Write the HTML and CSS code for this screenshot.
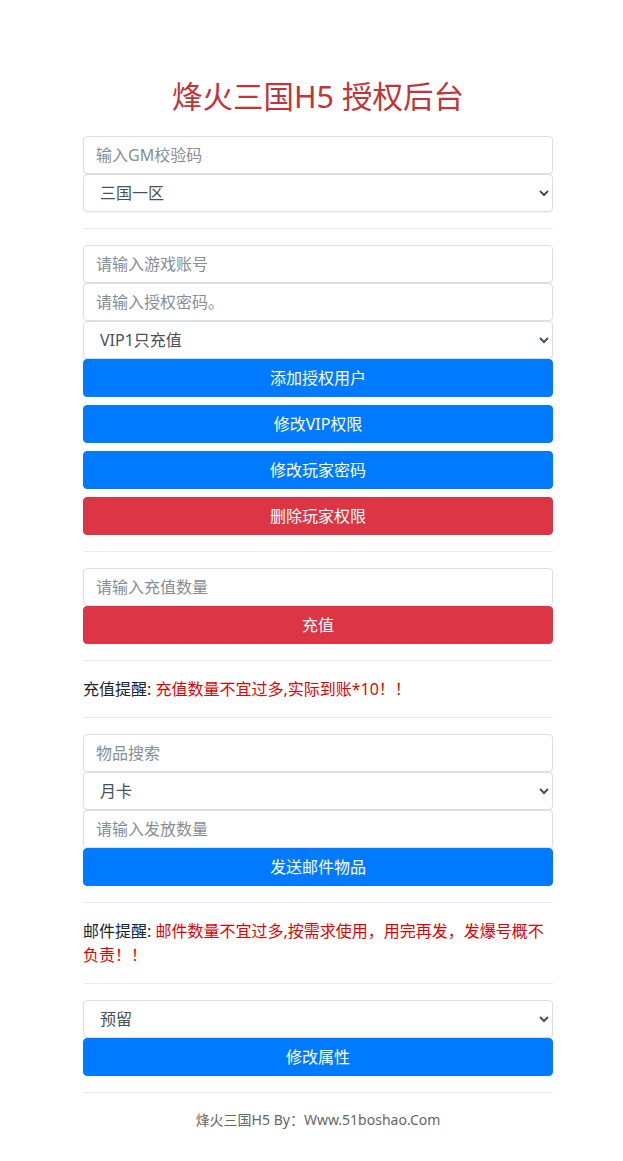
FILE: index.html
```html
<!DOCTYPE html>
<html lang="zh-CN">
<head>
  <meta charset="UTF-8">
  <title>烽火三国H5 授权后台</title>
  <link rel="stylesheet" href="styles.css">
</head>
<body>
  <div class="container">
    <h2 class="title">烽火三国H5 授权后台</h2>

    <div class="group">
      <input class="form-control" type="text" placeholder="输入GM校验码">
      <select class="form-control">
        <option>三国一区</option>
      </select>
    </div>

    <hr>

    <div class="group">
      <input class="form-control" type="text" placeholder="请输入游戏账号">
      <input class="form-control" type="password" placeholder="请输入授权密码。">
      <select class="form-control">
        <option>VIP1只充值</option>
      </select>
      <button class="btn btn-primary">添加授权用户</button>
      <button class="btn btn-primary">修改VIP权限</button>
      <button class="btn btn-primary">修改玩家密码</button>
      <button class="btn btn-danger">删除玩家权限</button>
    </div>

    <hr>

    <div class="group">
      <input class="form-control" type="text" placeholder="请输入充值数量">
      <button class="btn btn-danger">充值</button>
    </div>

    <hr>

    <p class="notice">充值提醒: <span class="warn">充值数量不宜过多,实际到账*10！！</span></p>

    <hr>

    <div class="group">
      <input class="form-control" type="text" placeholder="物品搜索">
      <select class="form-control">
        <option>月卡</option>
      </select>
      <input class="form-control" type="text" placeholder="请输入发放数量">
      <button class="btn btn-primary">发送邮件物品</button>
    </div>

    <hr>

    <p class="notice">邮件提醒: <span class="warn">邮件数量不宜过多,按需求使用，用完再发，发爆号概不负责！！</span></p>

    <hr>

    <div class="group">
      <select class="form-control">
        <option>预留</option>
      </select>
      <button class="btn btn-primary">修改属性</button>
    </div>

    <hr>

    <p class="footer">烽火三国H5 By：Www.51boshao.Com</p>
  </div>
</body>
</html>
```

FILE: styles.css
```css
* {
  box-sizing: border-box;
}

body {
  margin: 0;
  padding-left: 13px;
  background: #fff;
  color: #212529;
  font-family: "Noto Sans", "Noto Sans CJK SC", sans-serif;
  font-size: 16px;
  line-height: 1.5;
}

.container {
  width: 470px;
  margin: 0 auto;
  padding-top: 78px;
}

.title {
  margin: 0 0 21px;
  font-size: 30.5px;
  font-weight: 400;
  line-height: 1.2;
  text-align: center;
  color: #c0353a;
}

.group {
  display: flex;
  flex-direction: column;
}

.form-control {
  display: block;
  width: 100%;
  height: 38px;
  padding: 6px 12px;
  font-family: inherit;
  font-size: 16px;
  line-height: 1.5;
  color: #495057;
  background: #fff;
  border: 1px solid #dcdfe3;
  border-radius: 4px;
  box-shadow: 0 1px 2px rgba(0,0,0,0.06);
}

.form-control::placeholder {
  color: #868e96;
}

select.form-control {
  padding-left: 12px;
}

.btn {
  display: block;
  width: 100%;
  height: 38px;
  padding: 6px 12px;
  font-family: inherit;
  font-size: 16px;
  line-height: 1.5;
  color: #fff;
  border: 1px solid transparent;
  border-radius: 4px;
  cursor: pointer;
}

.btn + .btn {
  margin-top: 8px;
}

.btn-primary {
  background: #007bff;
  border-color: #007bff;
}

.btn-danger {
  background: #dc3545;
  border-color: #dc3545;
}

hr {
  margin: 16px 0;
  border: 0;
  border-top: 1px solid rgba(0,0,0,0.08);
}

.notice {
  margin: 0;
  color: #212529;
}

.warn {
  color: #e50000;
}

.footer {
  margin: 14px 0 20px;
  font-size: 14px;
  text-align: center;
  color: #666;
}
```
